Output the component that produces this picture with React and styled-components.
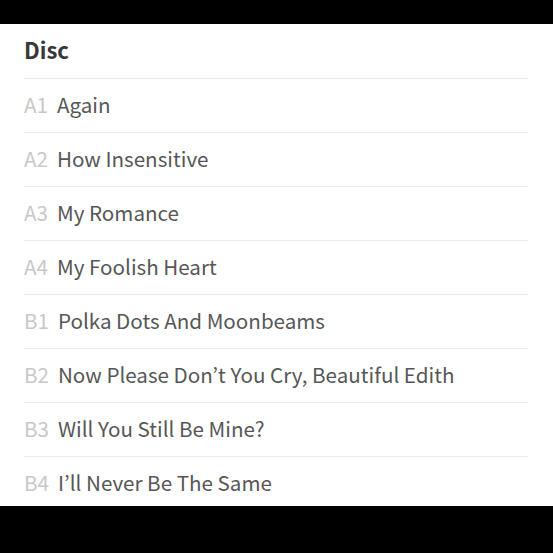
import React from "react";
import styled, { createGlobalStyle } from "styled-components";

const Global = createGlobalStyle`
  html, body { margin: 0; padding: 0; background: #000; }
  body { font-family: "Noto Sans CJK KR", "Open Sans", sans-serif; }
`;

const Screen = styled.div`
  width: 553px;
  height: 553px;
  background: #000;
  padding-top: 24px;
  box-sizing: border-box;
`;

const Panel = styled.section`
  background: #fff;
  height: 482px;
  overflow: hidden;
  padding: 0 25px 0 24px;
`;

const Title = styled.h2`
  margin: 0;
  height: 55px;
  padding-bottom: 4px;
  display: flex;
  align-items: center;
  font-size: 22px;
  font-weight: 700;
  color: #383838;
  border-bottom: 1.5px solid #e9e9e9;
  box-sizing: border-box;
`;

const List = styled.ol`
  list-style: none;
  margin: 0;
  padding: 0;
`;

const Row = styled.li`
  height: 54px;
  padding-bottom: 3px;
  display: flex;
  align-items: center;
  border-bottom: 1.5px solid #e9e9e9;
  box-sizing: border-box;
  font-size: 20.6px;
`;

const Pos = styled.span`
  color: #c8c8c8;
  margin-right: 9px;
`;

const Name = styled.span`
  color: #575757;
`;

const tracks = [
  ["A1", "Again"],
  ["A2", "How Insensitive"],
  ["A3", "My Romance"],
  ["A4", "My Foolish Heart"],
  ["B1", "Polka Dots And Moonbeams"],
  ["B2", "Now Please Don’t You Cry, Beautiful Edith"],
  ["B3", "Will You Still Be Mine?"],
  ["B4", "I’ll Never Be The Same"],
];

export default function App() {
  return (
    <Screen>
      <Global />
      <Panel>
        <Title>Disc</Title>
        <List>
          {tracks.map(([p, n]) => (
            <Row key={p}>
              <Pos>{p}</Pos>
              <Name>{n}</Name>
            </Row>
          ))}
        </List>
      </Panel>
    </Screen>
  );
}
